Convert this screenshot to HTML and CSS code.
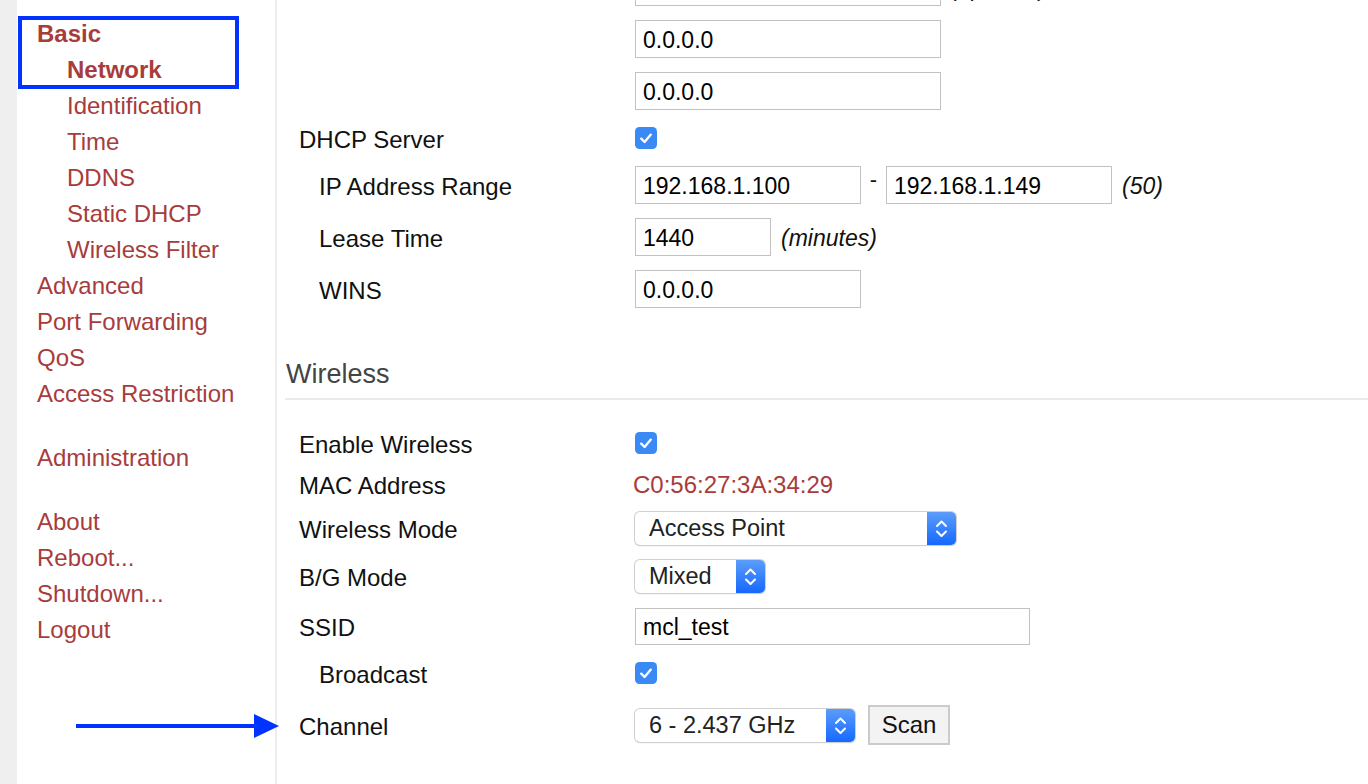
FILE: index.html
```html
<!DOCTYPE html>
<html>
<head>
<meta charset="utf-8">
<title>Basic Network</title>
<link rel="stylesheet" href="styles.css">
</head>
<body>
<div class="page">
  <div class="gutter"></div>
  <nav class="sidebar">
    <a class="nav-top" href="#">Basic</a>
    <a class="nav-sub current" href="#">Network</a>
    <a class="nav-sub" href="#">Identification</a>
    <a class="nav-sub" href="#">Time</a>
    <a class="nav-sub" href="#">DDNS</a>
    <a class="nav-sub" href="#">Static DHCP</a>
    <a class="nav-sub" href="#">Wireless Filter</a>
    <a class="nav-top" href="#">Advanced</a>
    <a class="nav-top" href="#">Port Forwarding</a>
    <a class="nav-top" href="#">QoS</a>
    <a class="nav-top" href="#">Access Restriction</a>
    <a class="nav-top gap" href="#">Administration</a>
    <a class="nav-top gap" href="#">About</a>
    <a class="nav-top" href="#">Reboot...</a>
    <a class="nav-top" href="#">Shutdown...</a>
    <a class="nav-top" href="#">Logout</a>
  </nav>
  <main class="main">
    <div class="content">
      <div class="row h52">
        <div class="label"></div>
        <div class="ctrl"><input class="inp w306" type="text" value=""><span class="note">(optional)</span></div>
      </div>
      <div class="row h52">
        <div class="label"></div>
        <div class="ctrl"><input class="inp w306" type="text" value="0.0.0.0"></div>
      </div>
      <div class="row h52">
        <div class="label"></div>
        <div class="ctrl"><input class="inp w306" type="text" value="0.0.0.0"></div>
      </div>
      <div class="row h42">
        <div class="label">DHCP Server</div>
        <div class="ctrl"><span class="check"><svg width="22" height="22" viewBox="0 0 22 22"><rect width="22" height="22" rx="4.5" fill="#3a8af6"/><path d="M6.2 11.6 L9.6 15 L15.8 7.6" fill="none" stroke="#fff" stroke-width="2.3" stroke-linecap="round" stroke-linejoin="round"/></svg></span></div>
      </div>
      <div class="row h52">
        <div class="label sub">IP Address Range</div>
        <div class="ctrl"><input class="inp w226" type="text" value="192.168.1.100"><span class="dash">-</span><input class="inp w226" type="text" value="192.168.1.149"><span class="note">(50)</span></div>
      </div>
      <div class="row h52">
        <div class="label sub">Lease Time</div>
        <div class="ctrl"><input class="inp w136" type="text" value="1440"><span class="note">(minutes)</span></div>
      </div>
      <div class="row h52">
        <div class="label sub">WINS</div>
        <div class="ctrl"><input class="inp w226" type="text" value="0.0.0.0"></div>
      </div>

      <h2 class="section">Wireless</h2>

      <div class="wireless">
        <div class="row h44">
          <div class="label">Enable Wireless</div>
          <div class="ctrl"><span class="check"><svg width="22" height="22" viewBox="0 0 22 22"><rect width="22" height="22" rx="4.5" fill="#3a8af6"/><path d="M6.2 11.6 L9.6 15 L15.8 7.6" fill="none" stroke="#fff" stroke-width="2.3" stroke-linecap="round" stroke-linejoin="round"/></svg></span></div>
        </div>
        <div class="row h38">
          <div class="label">MAC Address</div>
          <div class="ctrl"><span class="mac">C0:56:27:3A:34:29</span></div>
        </div>
        <div class="row h50">
          <div class="label">Wireless Mode</div>
          <div class="ctrl">
            <div class="select w321"><span class="sel-val">Access Point</span><span class="sel-btn"><svg width="29" height="33" viewBox="0 0 29 33"><path d="M10 14 L14.5 9.5 L19 14 M10 19.5 L14.5 24 L19 19.5" fill="none" stroke="#fff" stroke-width="2" stroke-linecap="round" stroke-linejoin="round"/></svg></span></div>
          </div>
        </div>
        <div class="row h46">
          <div class="label">B/G Mode</div>
          <div class="ctrl">
            <div class="select w130"><span class="sel-val">Mixed</span><span class="sel-btn"><svg width="29" height="33" viewBox="0 0 29 33"><path d="M10 14 L14.5 9.5 L19 14 M10 19.5 L14.5 24 L19 19.5" fill="none" stroke="#fff" stroke-width="2" stroke-linecap="round" stroke-linejoin="round"/></svg></span></div>
          </div>
        </div>
        <div class="row h54">
          <div class="label">SSID</div>
          <div class="ctrl"><input class="inp w395" type="text" value="mcl_test"></div>
        </div>
        <div class="row h40">
          <div class="label sub">Broadcast</div>
          <div class="ctrl"><span class="check"><svg width="22" height="22" viewBox="0 0 22 22"><rect width="22" height="22" rx="4.5" fill="#3a8af6"/><path d="M6.2 11.6 L9.6 15 L15.8 7.6" fill="none" stroke="#fff" stroke-width="2.3" stroke-linecap="round" stroke-linejoin="round"/></svg></span></div>
        </div>
        <div class="row h64">
          <div class="label">Channel</div>
          <div class="ctrl">
            <div class="select w220"><span class="sel-val">6 - 2.437 GHz</span><span class="sel-btn"><svg width="29" height="33" viewBox="0 0 29 33"><path d="M10 14 L14.5 9.5 L19 14 M10 19.5 L14.5 24 L19 19.5" fill="none" stroke="#fff" stroke-width="2" stroke-linecap="round" stroke-linejoin="round"/></svg></span></div>
            <button class="btn" type="button">Scan</button>
          </div>
        </div>
      </div>
    </div>
  </main>

  <div class="annot-box"></div>
  <svg class="annot-arrow" width="204" height="26" viewBox="0 0 204 26"><rect x="0" y="10" width="182" height="4" fill="#0033ff"/><path d="M178 0 L203 12 L178 24 Z" fill="#0033ff"/></svg>
</div>
</body>
</html>
```
FILE: styles.css
```css
* { box-sizing: border-box; }
html, body { margin: 0; padding: 0; background: #fff; }
body {
  font-family: "Liberation Sans", Arial, Helvetica, sans-serif;
  color: #111;
  font-size: 24px;
}
.page {
  position: relative;
  display: flex;
  height: 784px;
  overflow: hidden;
}
.gutter {
  width: 17px;
  flex: 0 0 17px;
  background: #efefef;
}
.sidebar {
  width: 260px;
  flex: 0 0 260px;
  border-right: 2px solid #ececec;
  padding: 16px 0 0 20px;
  display: flex;
  flex-direction: column;
}
.sidebar a {
  display: block;
  color: #a83c3c;
  text-decoration: none;
  font-size: 24px;
  line-height: 36px;
  height: 36px;
  white-space: nowrap;
}
.sidebar .nav-sub { padding-left: 30px; }
.sidebar .nav-top:first-child { font-weight: bold; }
.sidebar .current { font-weight: bold; }
.sidebar .gap { margin-top: 28px; }

.main {
  flex: 1;
  min-width: 0;
  overflow: hidden;
}
.content {
  margin-top: -39px;
}
.row {
  display: flex;
  align-items: center;
  padding-left: 22px;
}
.h38 { height: 38px; }
.h40 { height: 40px; }
.h42 { height: 42px; }
.h44 { height: 44px; }
.h46 { height: 46px; }
.h50 { height: 50px; }
.h52 { height: 52px; }
.h54 { height: 54px; }
.h64 { height: 64px; }
.label {
  width: 336px;
  flex: 0 0 336px;
  font-size: 24px;
  line-height: 28px;
  padding-top: 3px;
  color: #111;
  white-space: nowrap;
}
.label.sub { padding-left: 20px; }
.ctrl {
  display: flex;
  align-items: center;
}
.inp {
  height: 38px;
  border: 1px solid #c2c2c2;
  border-radius: 0;
  padding: 3px 7px 0;
  font-family: "Liberation Sans", Arial, sans-serif;
  font-size: 23px;
  color: #000;
  background: #fff;
  outline: none;
}
.w136 { width: 136px; }
.w226 { width: 226px; }
.w306 { width: 306px; }
.w395 { width: 395px; height: 37px; }
.dash {
  font-size: 22px;
  width: 25px;
  text-align: center;
  position: relative;
  top: -5px;
}
.note {
  font-style: italic;
  font-size: 23px;
  margin-left: 10px;
  padding-top: 3px;
  color: #111;
}
.check {
  display: block;
  width: 22px;
  height: 22px;
}
.check svg { display: block; }
.mac {
  color: #a83c3c;
  font-size: 24px;
  margin-left: -2px;
  padding-top: 2px;
}
.section {
  margin: 0 0 0 8px;
  padding: 44px 0 9px 1px;
  font-weight: normal;
  font-size: 27px;
  line-height: 30px;
  color: #444;
  border-bottom: 2px solid #ebebeb;
}
.wireless {
  padding-top: 21px;
}
.select {
  display: flex;
  height: 33px;
  border-radius: 5px;
  background: #fff;
  box-shadow: 0 0 0 1px #cfcfcf, 0 1px 1.5px rgba(0,0,0,0.18);
  overflow: hidden;
}
.w130 { width: 130px; }
.w220 { width: 220px; }
.w321 { width: 321px; }
.sel-val {
  flex: 1;
  padding-left: 14px;
  font-size: 23.5px;
  line-height: 33px;
  color: #222;
  white-space: nowrap;
}
.sel-btn {
  width: 29px;
  flex: 0 0 29px;
  height: 33px;
  background: linear-gradient(#5c9dfb, #1668ff);
}
.sel-btn svg { display: block; }
.btn {
  margin-left: 13px;
  width: 82px;
  height: 40px;
  border: 2px solid #cbcbcb;
  background: #f3f3f3;
  font-family: "Liberation Sans", Arial, sans-serif;
  font-size: 24px;
  color: #111;
  padding: 0;
  border-radius: 0;
}
.annot-box {
  position: absolute;
  left: 18px;
  top: 16px;
  width: 221px;
  height: 73px;
  border: 4px solid #0033ff;
}
.annot-arrow {
  position: absolute;
  left: 76px;
  top: 714px;
}
```
